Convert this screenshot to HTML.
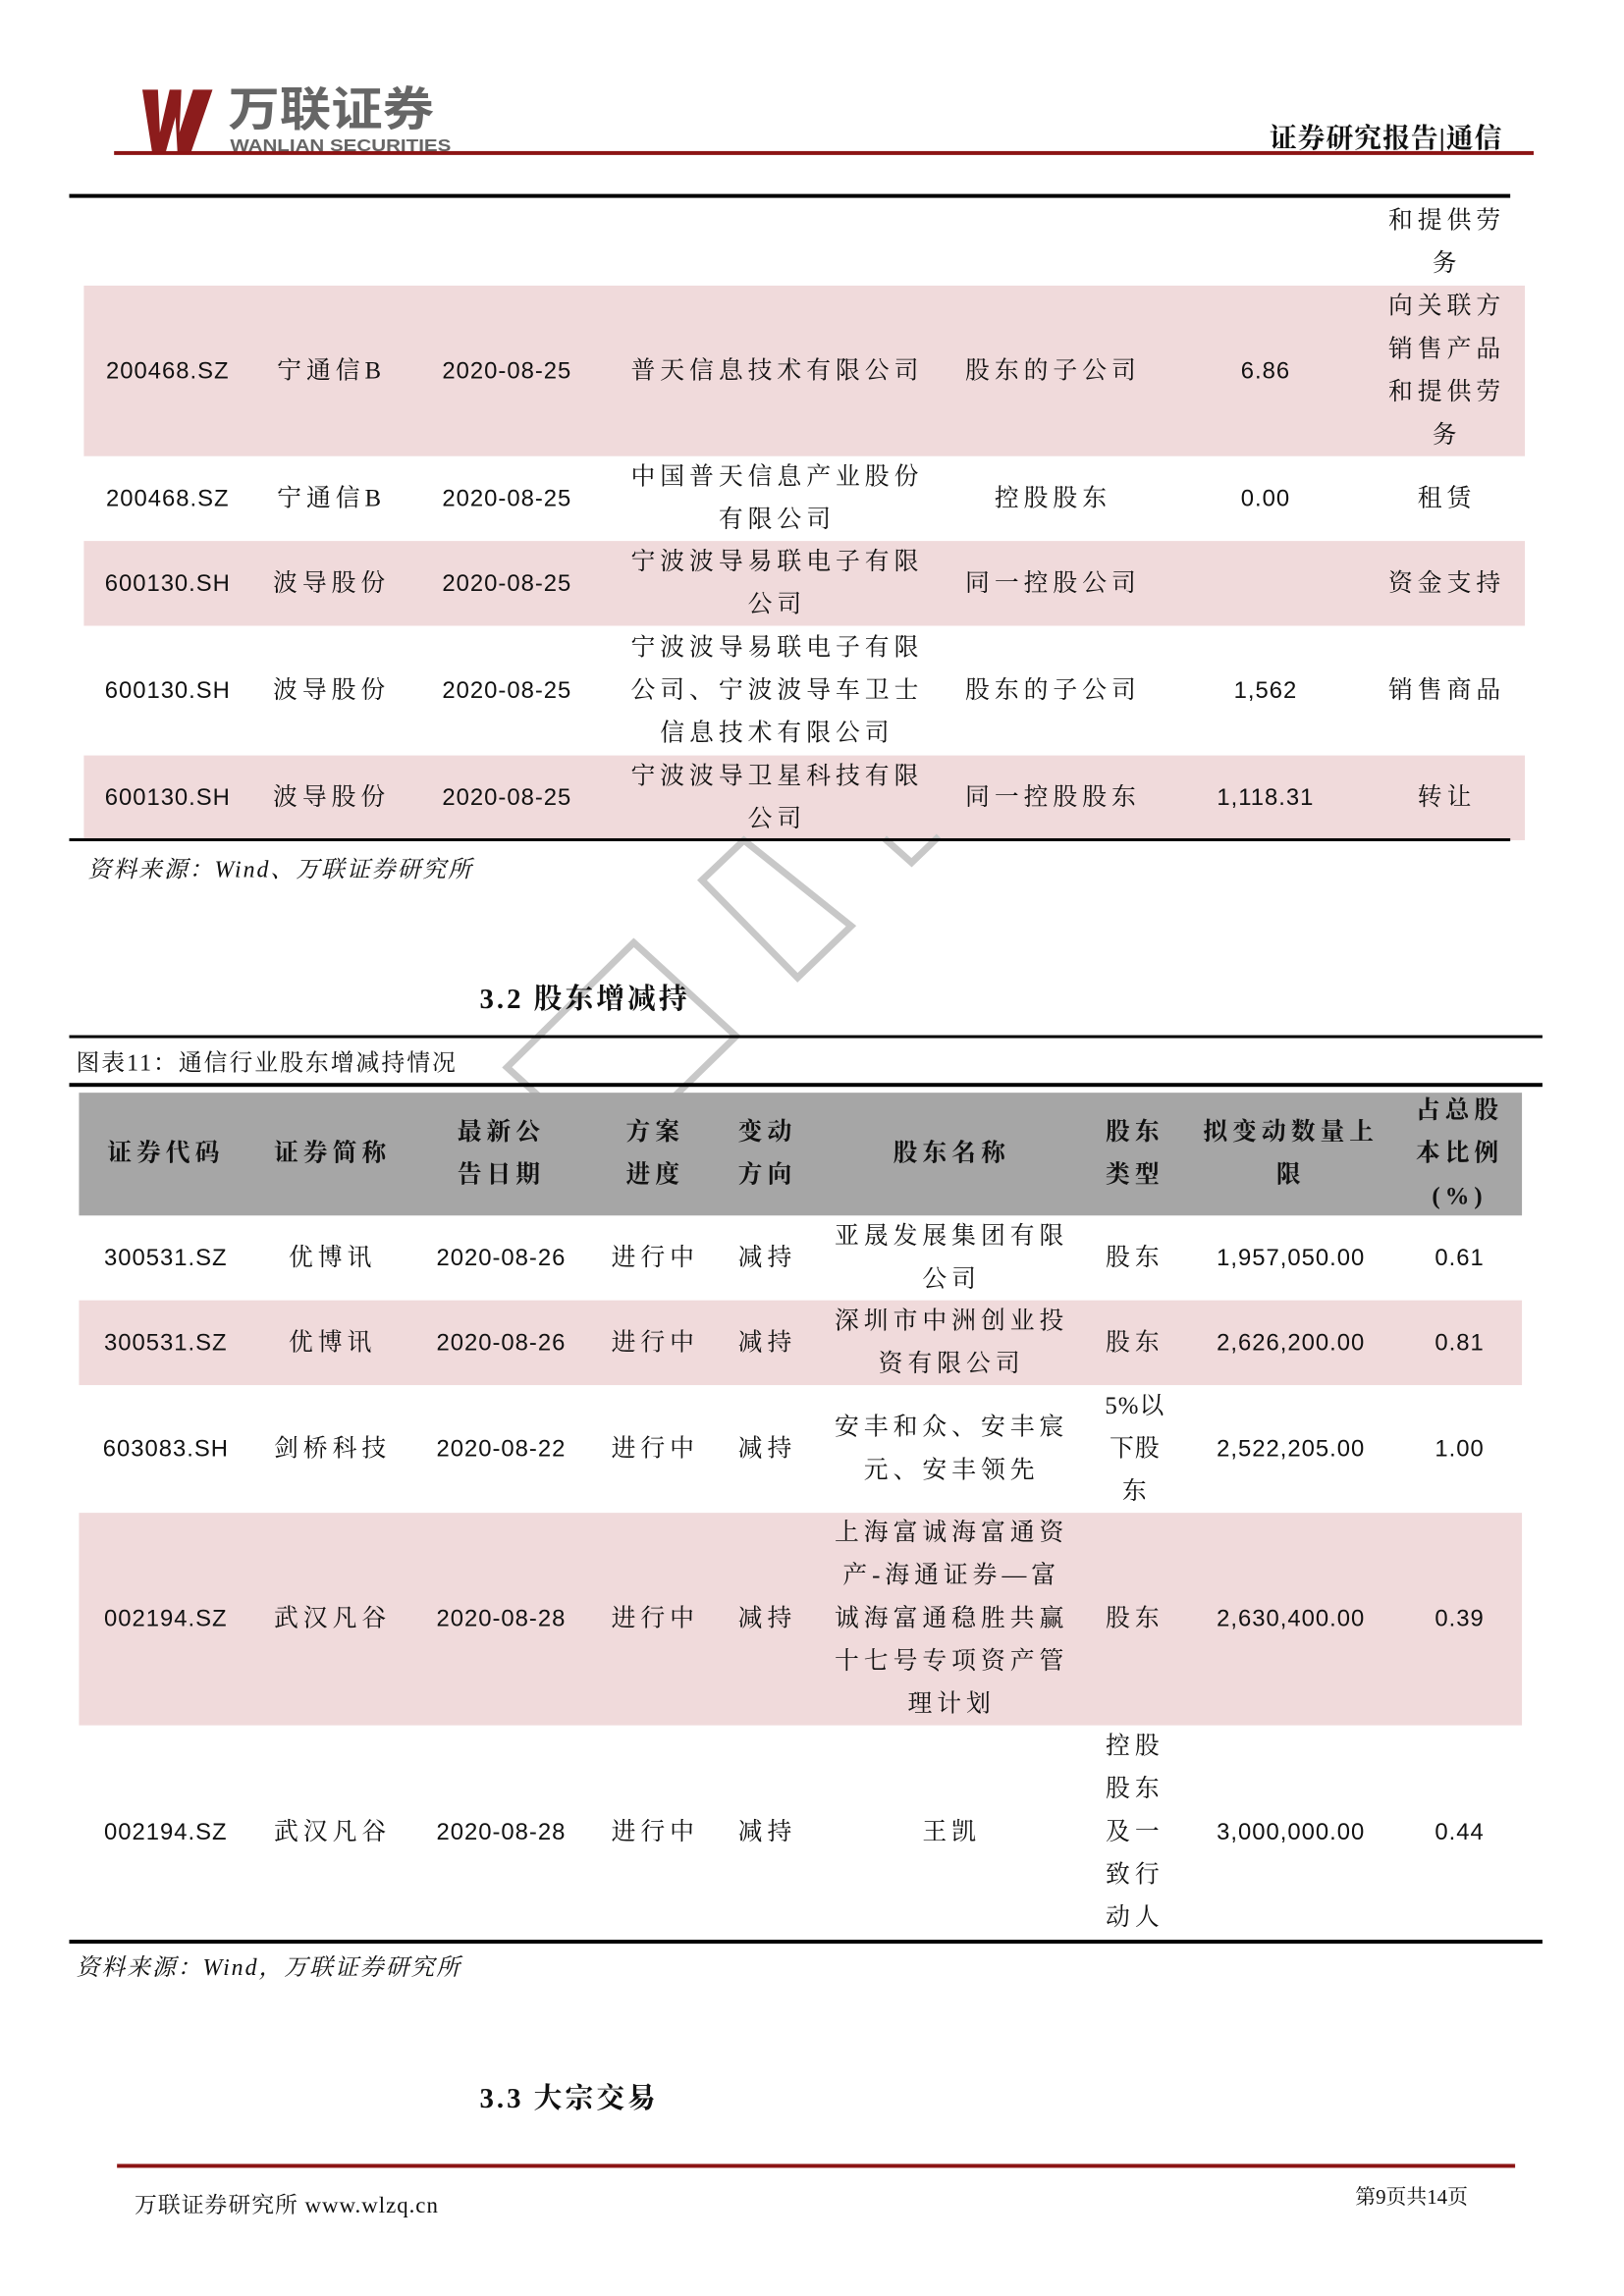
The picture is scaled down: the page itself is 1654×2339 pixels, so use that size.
<!DOCTYPE html>
<html><head><meta charset="utf-8">
<style>
body{margin:0;background:#fff}
#w{position:relative;width:1654px;height:2339px;overflow:hidden}
#p{position:relative;width:1654px;height:2339px;font-family:"Liberation Serif","Noto Serif CJK SC",serif;color:#111;transform:scale(0.993);transform-origin:0 0}
.a{position:absolute}
.c{position:absolute;display:flex;align-items:center;justify-content:center;text-align:center;font-size:25px;line-height:44px;letter-spacing:5px}
.n{letter-spacing:1px;font-family:"Liberation Sans","Noto Serif CJK SC",sans-serif;font-size:24px}
.bg{position:absolute}
.h{font-weight:bold}
.line{position:absolute;background:#000}
</style></head><body><div id="w"><div id="p">
<!-- header -->
<svg class="a" style="left:140px;top:90px" width="90" height="68" viewBox="0 0 90 68">
<polygon points="6,2 22,2 24,46 34,2 46,2 44,46 58,2 78,2 56,66 42,66 40,30 30,66 16,66" fill="#8c1c1c"/>
</svg>
<div class="a" style="left:234px;top:90px;font:bold 48px/48px 'Liberation Sans','Noto Sans CJK SC',sans-serif;color:#666;transform:scaleX(1.1);transform-origin:left">万联证券</div>
<div class="a" style="left:236px;top:140px;font:bold 18px/18px 'Liberation Sans',sans-serif;color:#666;transform:scaleX(1.15);transform-origin:left">WANLIAN SECURITIES</div>
<div class="a" style="left:1302px;top:120px;font:bold 28px 'Liberation Serif','Noto Serif CJK SC',serif;letter-spacing:1px">证券研究报告|通信</div>
<div class="a" style="left:117px;top:155px;width:1456px;height:4px;background:#8c1414"></div>

<!-- table1 backgrounds -->
<div class="bg" style="left:86px;top:293px;width:1478px;height:175px;background:#f0dadb"></div>
<div class="bg" style="left:86px;top:555px;width:1478px;height:87px;background:#f0dadb"></div>
<div class="bg" style="left:86px;top:775px;width:1478px;height:87px;background:#f0dadb"></div>
<!-- table2 backgrounds -->
<div class="bg" style="left:81px;top:1334px;width:1480px;height:87px;background:#f0dadb"></div>
<div class="bg" style="left:81px;top:1552px;width:1480px;height:218px;background:#f0dadb"></div>

<!-- watermark -->
<svg class="a" style="left:0;top:0" width="1654" height="2339">
<g fill="none" stroke="#c8c8c8" stroke-width="7">
<polygon points="720,903 763,862 873,950 818,1003"/>
<polygon points="650,967 755,1063 625,1190 520,1095"/>
<polyline points="907,860 935,885 963,858"/>
</g></svg>
<div class="bg" style="left:81px;top:1121px;width:1480px;height:126px;background:#a6a6a6"></div>

<!-- table1 -->
<div class="line" style="left:71px;top:199px;width:1478px;height:4px"></div>
<div class="line" style="left:71px;top:860px;width:1478px;height:3px"></div>

<div class="c" style="left:1414px;top:205px;width:140px;height:88px">和提供劳<br>务</div>

<div class="c n" style="left:92px;top:293px;width:160px;height:175px">200468.SZ</div>
<div class="c" style="left:270px;top:293px;width:140px;height:175px">宁通信B</div>
<div class="c n" style="left:440px;top:293px;width:160px;height:175px">2020-08-25</div>
<div class="c" style="left:632px;top:293px;width:330px;height:175px">普天信息技术有限公司</div>
<div class="c" style="left:980px;top:293px;width:200px;height:175px">股东的子公司</div>
<div class="c n" style="left:1238px;top:293px;width:120px;height:175px">6.86</div>
<div class="c" style="left:1414px;top:293px;width:140px;height:175px">向关联方<br>销售产品<br>和提供劳<br>务</div>

<div class="c n" style="left:92px;top:468px;width:160px;height:87px">200468.SZ</div>
<div class="c" style="left:270px;top:468px;width:140px;height:87px">宁通信B</div>
<div class="c n" style="left:440px;top:468px;width:160px;height:87px">2020-08-25</div>
<div class="c" style="left:632px;top:468px;width:330px;height:87px">中国普天信息产业股份<br>有限公司</div>
<div class="c" style="left:980px;top:468px;width:200px;height:87px">控股股东</div>
<div class="c n" style="left:1238px;top:468px;width:120px;height:87px">0.00</div>
<div class="c" style="left:1414px;top:468px;width:140px;height:87px">租赁</div>

<div class="c n" style="left:92px;top:555px;width:160px;height:87px">600130.SH</div>
<div class="c" style="left:270px;top:555px;width:140px;height:87px">波导股份</div>
<div class="c n" style="left:440px;top:555px;width:160px;height:87px">2020-08-25</div>
<div class="c" style="left:632px;top:555px;width:330px;height:87px">宁波波导易联电子有限<br>公司</div>
<div class="c" style="left:980px;top:555px;width:200px;height:87px">同一控股公司</div>
<div class="c" style="left:1414px;top:555px;width:140px;height:87px">资金支持</div>

<div class="c n" style="left:92px;top:642px;width:160px;height:133px">600130.SH</div>
<div class="c" style="left:270px;top:642px;width:140px;height:133px">波导股份</div>
<div class="c n" style="left:440px;top:642px;width:160px;height:133px">2020-08-25</div>
<div class="c" style="left:632px;top:642px;width:330px;height:133px">宁波波导易联电子有限<br>公司、宁波波导车卫士<br>信息技术有限公司</div>
<div class="c" style="left:980px;top:642px;width:200px;height:133px">股东的子公司</div>
<div class="c n" style="left:1238px;top:642px;width:120px;height:133px">1,562</div>
<div class="c" style="left:1414px;top:642px;width:140px;height:133px">销售商品</div>

<div class="c n" style="left:92px;top:775px;width:160px;height:87px">600130.SH</div>
<div class="c" style="left:270px;top:775px;width:140px;height:87px">波导股份</div>
<div class="c n" style="left:440px;top:775px;width:160px;height:87px">2020-08-25</div>
<div class="c" style="left:632px;top:775px;width:330px;height:87px">宁波波导卫星科技有限<br>公司</div>
<div class="c" style="left:980px;top:775px;width:200px;height:87px">同一控股股东</div>
<div class="c n" style="left:1228px;top:775px;width:140px;height:87px">1,118.31</div>
<div class="c" style="left:1414px;top:775px;width:140px;height:87px">转让</div>

<div class="a" style="left:90px;top:872px;font-size:24px;font-style:italic;letter-spacing:2px">资料来源：Wind、万联证券研究所</div>

<div class="a h" style="left:492px;top:1002px;font-size:29px;letter-spacing:3px">3.2 股东增减持</div>

<!-- table2 -->
<div class="line" style="left:71px;top:1062px;width:1511px;height:3px"></div>
<div class="a" style="left:78px;top:1070px;font-size:24px;letter-spacing:2px">图表11：通信行业股东增减持情况</div>
<div class="line" style="left:71px;top:1111px;width:1511px;height:4px"></div>
<div class="line" style="left:71px;top:1990px;width:1511px;height:4px"></div>

<div class="c h" style="left:100px;top:1121px;width:140px;height:126px">证券代码</div>
<div class="c h" style="left:271px;top:1121px;width:140px;height:126px">证券简称</div>
<div class="c h" style="left:454px;top:1121px;width:120px;height:126px">最新公<br>告日期</div>
<div class="c h" style="left:622px;top:1121px;width:100px;height:126px">方案<br>进度</div>
<div class="c h" style="left:737px;top:1121px;width:100px;height:126px">变动<br>方向</div>
<div class="c h" style="left:856px;top:1121px;width:240px;height:126px">股东名称</div>
<div class="c h" style="left:1124px;top:1121px;width:80px;height:126px">股东<br>类型</div>
<div class="c h" style="left:1224px;top:1121px;width:200px;height:126px">拟变动数量上<br>限</div>
<div class="c h" style="left:1442px;top:1121px;width:110px;height:126px">占总股<br>本比例<br>(%)</div>

<!-- rows -->
<div class="c n" style="left:90px;top:1247px;width:160px;height:87px">300531.SZ</div>
<div class="c" style="left:271px;top:1247px;width:140px;height:87px">优博讯</div>
<div class="c n" style="left:434px;top:1247px;width:160px;height:87px">2020-08-26</div>
<div class="c" style="left:622px;top:1247px;width:100px;height:87px">进行中</div>
<div class="c" style="left:737px;top:1247px;width:100px;height:87px">减持</div>
<div class="c" style="left:846px;top:1247px;width:260px;height:87px">亚晟发展集团有限<br>公司</div>
<div class="c" style="left:1124px;top:1247px;width:80px;height:87px">股东</div>
<div class="c n" style="left:1224px;top:1247px;width:200px;height:87px">1,957,050.00</div>
<div class="c n" style="left:1442px;top:1247px;width:110px;height:87px">0.61</div>

<div class="c n" style="left:90px;top:1334px;width:160px;height:87px">300531.SZ</div>
<div class="c" style="left:271px;top:1334px;width:140px;height:87px">优博讯</div>
<div class="c n" style="left:434px;top:1334px;width:160px;height:87px">2020-08-26</div>
<div class="c" style="left:622px;top:1334px;width:100px;height:87px">进行中</div>
<div class="c" style="left:737px;top:1334px;width:100px;height:87px">减持</div>
<div class="c" style="left:846px;top:1334px;width:260px;height:87px">深圳市中洲创业投<br>资有限公司</div>
<div class="c" style="left:1124px;top:1334px;width:80px;height:87px">股东</div>
<div class="c n" style="left:1224px;top:1334px;width:200px;height:87px">2,626,200.00</div>
<div class="c n" style="left:1442px;top:1334px;width:110px;height:87px">0.81</div>

<div class="c n" style="left:90px;top:1421px;width:160px;height:131px">603083.SH</div>
<div class="c" style="left:271px;top:1421px;width:140px;height:131px">剑桥科技</div>
<div class="c n" style="left:434px;top:1421px;width:160px;height:131px">2020-08-22</div>
<div class="c" style="left:622px;top:1421px;width:100px;height:131px">进行中</div>
<div class="c" style="left:737px;top:1421px;width:100px;height:131px">减持</div>
<div class="c" style="left:846px;top:1421px;width:260px;height:131px">安丰和众、安丰宸<br>元、安丰领先</div>
<div class="c" style="left:1124px;top:1421px;width:80px;height:131px;letter-spacing:1px">5%以<br>下股<br>东</div>
<div class="c n" style="left:1224px;top:1421px;width:200px;height:131px">2,522,205.00</div>
<div class="c n" style="left:1442px;top:1421px;width:110px;height:131px">1.00</div>

<div class="c n" style="left:90px;top:1552px;width:160px;height:218px">002194.SZ</div>
<div class="c" style="left:271px;top:1552px;width:140px;height:218px">武汉凡谷</div>
<div class="c n" style="left:434px;top:1552px;width:160px;height:218px">2020-08-28</div>
<div class="c" style="left:622px;top:1552px;width:100px;height:218px">进行中</div>
<div class="c" style="left:737px;top:1552px;width:100px;height:218px">减持</div>
<div class="c" style="left:846px;top:1552px;width:260px;height:218px">上海富诚海富通资<br>产-海通证券—富<br>诚海富通稳胜共赢<br>十七号专项资产管<br>理计划</div>
<div class="c" style="left:1124px;top:1552px;width:80px;height:218px">股东</div>
<div class="c n" style="left:1224px;top:1552px;width:200px;height:218px">2,630,400.00</div>
<div class="c n" style="left:1442px;top:1552px;width:110px;height:218px">0.39</div>

<div class="c n" style="left:90px;top:1770px;width:160px;height:220px">002194.SZ</div>
<div class="c" style="left:271px;top:1770px;width:140px;height:220px">武汉凡谷</div>
<div class="c n" style="left:434px;top:1770px;width:160px;height:220px">2020-08-28</div>
<div class="c" style="left:622px;top:1770px;width:100px;height:220px">进行中</div>
<div class="c" style="left:737px;top:1770px;width:100px;height:220px">减持</div>
<div class="c" style="left:846px;top:1770px;width:260px;height:220px">王凯</div>
<div class="c" style="left:1124px;top:1770px;width:80px;height:220px">控股<br>股东<br>及一<br>致行<br>动人</div>
<div class="c n" style="left:1224px;top:1770px;width:200px;height:220px">3,000,000.00</div>
<div class="c n" style="left:1442px;top:1770px;width:110px;height:220px">0.44</div>

<div class="a" style="left:78px;top:1998px;font-size:24px;font-style:italic;letter-spacing:2px">资料来源：Wind，万联证券研究所</div>

<div class="a h" style="left:492px;top:2130px;font-size:29px;letter-spacing:3px">3.3 大宗交易</div>

<!-- footer -->
<div class="a" style="left:120px;top:2220px;width:1434px;height:4px;background:#8c1414"></div>
<div class="a" style="left:138px;top:2244px;font-size:23px;letter-spacing:1px">万联证券研究所 www.wlzq.cn</div>
<div class="a" style="left:1390px;top:2238px;font-size:21px">第9页共14页</div>
</div></div></body></html>
